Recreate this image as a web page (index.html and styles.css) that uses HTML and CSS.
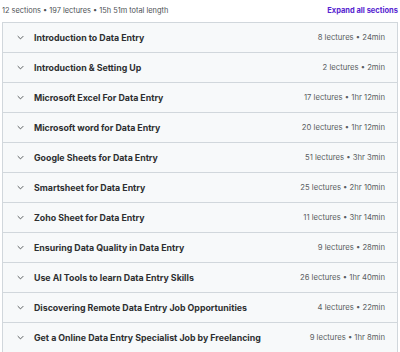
FILE: index.html
```html
<!DOCTYPE html>
<html lang="en">
<head>
  <meta charset="UTF-8" />
  <title>Course content</title>
  <link rel="stylesheet" href="styles.css">
</head>
<body>
  <div class="curriculum">
    <div class="summary">
      <span class="summary-text">12 sections • 197 lectures • 15h 51m total length</span>
      <a href="#" class="expand-all">Expand all sections</a>
    </div>

    <div class="sections">
      <div class="section">
        <span class="chevron"><svg viewBox="0 0 10 6" width="7" height="5"><path d="M1 1l4 4 4-4" /></svg></span>
        <span class="section-title">Introduction to Data Entry</span>
        <span class="section-meta">8 lectures • 24min</span>
      </div>
      <div class="section">
        <span class="chevron"><svg viewBox="0 0 10 6" width="7" height="5"><path d="M1 1l4 4 4-4" /></svg></span>
        <span class="section-title">Introduction &amp; Setting Up</span>
        <span class="section-meta">2 lectures • 2min</span>
      </div>
      <div class="section">
        <span class="chevron"><svg viewBox="0 0 10 6" width="7" height="5"><path d="M1 1l4 4 4-4" /></svg></span>
        <span class="section-title">Microsoft Excel For Data Entry</span>
        <span class="section-meta">17 lectures • 1hr 12min</span>
      </div>
      <div class="section">
        <span class="chevron"><svg viewBox="0 0 10 6" width="7" height="5"><path d="M1 1l4 4 4-4" /></svg></span>
        <span class="section-title">Microsoft word for Data Entry</span>
        <span class="section-meta">20 lectures • 1hr 12min</span>
      </div>
      <div class="section">
        <span class="chevron"><svg viewBox="0 0 10 6" width="7" height="5"><path d="M1 1l4 4 4-4" /></svg></span>
        <span class="section-title">Google Sheets for Data Entry</span>
        <span class="section-meta">51 lectures • 3hr 3min</span>
      </div>
      <div class="section">
        <span class="chevron"><svg viewBox="0 0 10 6" width="7" height="5"><path d="M1 1l4 4 4-4" /></svg></span>
        <span class="section-title">Smartsheet for Data Entry</span>
        <span class="section-meta">25 lectures • 2hr 10min</span>
      </div>
      <div class="section">
        <span class="chevron"><svg viewBox="0 0 10 6" width="7" height="5"><path d="M1 1l4 4 4-4" /></svg></span>
        <span class="section-title">Zoho Sheet for Data Entry</span>
        <span class="section-meta">11 lectures • 3hr 14min</span>
      </div>
      <div class="section">
        <span class="chevron"><svg viewBox="0 0 10 6" width="7" height="5"><path d="M1 1l4 4 4-4" /></svg></span>
        <span class="section-title">Ensuring Data Quality in Data Entry</span>
        <span class="section-meta">9 lectures • 28min</span>
      </div>
      <div class="section">
        <span class="chevron"><svg viewBox="0 0 10 6" width="7" height="5"><path d="M1 1l4 4 4-4" /></svg></span>
        <span class="section-title">Use AI Tools to learn Data Entry Skills</span>
        <span class="section-meta">26 lectures • 1hr 40min</span>
      </div>
      <div class="section">
        <span class="chevron"><svg viewBox="0 0 10 6" width="7" height="5"><path d="M1 1l4 4 4-4" /></svg></span>
        <span class="section-title">Discovering Remote Data Entry Job Opportunities</span>
        <span class="section-meta">4 lectures • 22min</span>
      </div>
      <div class="section">
        <span class="chevron"><svg viewBox="0 0 10 6" width="7" height="5"><path d="M1 1l4 4 4-4" /></svg></span>
        <span class="section-title">Get a Online Data Entry Specialist Job by Freelancing</span>
        <span class="section-meta">9 lectures • 1hr 8min</span>
      </div>
    </div>
  </div>
</body>
</html>
```

FILE: styles.css
```css
* { margin: 0; padding: 0; box-sizing: border-box; }

body {
  font-family: 'Inter', 'Roboto', sans-serif;
  color: #2d2f31;
  background: #fff;
}

.curriculum {
  padding: 0 2px;
}

.summary {
  display: flex;
  justify-content: space-between;
  align-items: center;
  height: 22px;
  padding-bottom: 1px;
}

.summary-text {
  font-size: 7.4px;
  color: #4d5155;
}

.expand-all {
  font-size: 7.5px;
  font-weight: 700;
  color: #5624d0;
  text-decoration: none;
}

.sections {
  border: 1px solid #d1d7dc;
  border-bottom: none;
}

.section {
  display: flex;
  align-items: center;
  height: 30px;
  padding: 0 12px 0 14px;
  background: #f7f9fa;
  border-bottom: 1px solid #d1d7dc;
}

.chevron {
  display: flex;
  width: 17px;
}

.chevron svg {
  fill: none;
  stroke: #3e4143;
  stroke-width: 1.2;
}

.section-title {
  flex: 1;
  font-size: 8.8px;
  font-weight: 700;
  white-space: nowrap;
}

.section-meta {
  font-size: 7.7px;
  color: #5a5e62;
  white-space: nowrap;
}
```
